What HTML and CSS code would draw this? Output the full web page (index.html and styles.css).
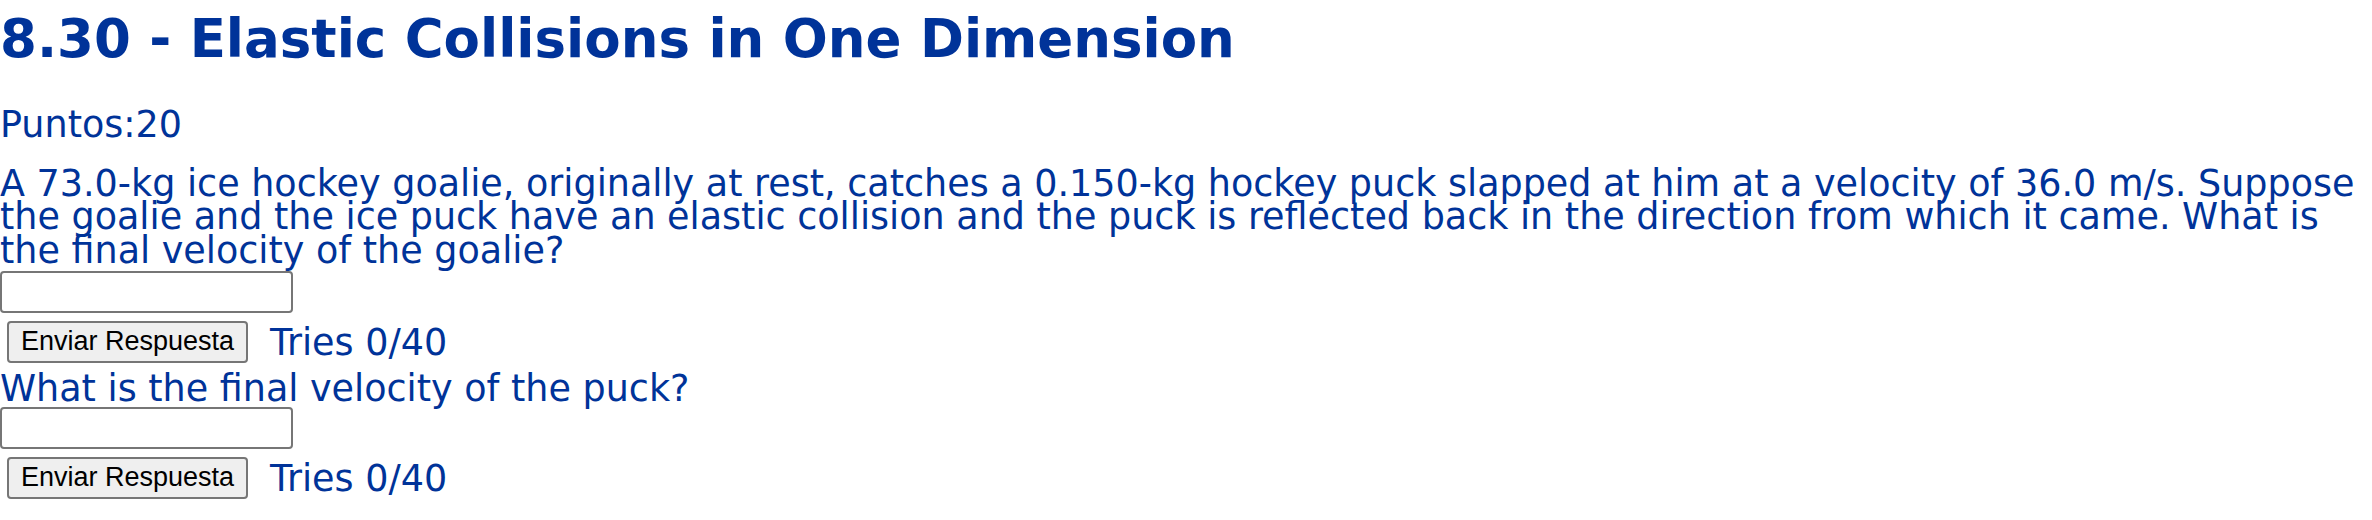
FILE: index.html
```html
<!DOCTYPE html>
<html lang="en">
<head>
<meta charset="utf-8">
<title>8.30 - Elastic Collisions in One Dimension</title>
<link rel="stylesheet" href="styles.css">
</head>
<body>
<h1 class="title">8.30 - Elastic Collisions in One Dimension</h1>
<div class="points">Puntos:20</div>
<p class="question">A 73.0-kg ice hockey goalie, originally at rest, catches a 0.150-kg hockey puck slapped at him at a velocity of 36.0 m/s. Suppose the goalie and the ice puck have an elastic collision and the puck is reflected back in the direction from which it came. What is the final velocity of the goalie?</p>
<input class="answer answer-first" type="text">
<div class="submit-row">
  <button class="submit" type="button">Enviar Respuesta</button>
  <span class="tries">Tries 0/40</span>
</div>
<div class="subquestion">What is the final velocity of the puck?</div>
<input class="answer answer-second" type="text">
<div class="submit-row">
  <button class="submit" type="button">Enviar Respuesta</button>
  <span class="tries">Tries 0/40</span>
</div>
</body>
</html>
```

FILE: styles.css
```css
html, body {
  background: #ffffff;
}
body {
  margin: 0;
  font-family: "DejaVu Sans", Verdana, sans-serif;
  font-size: 36.5px;
  line-height: 33.5px;
  color: #003399;
}
.title {
  margin: 8px 0 0;
  font-size: 53px;
  line-height: 62px;
  font-weight: bold;
}
.points {
  margin-top: 38px;
}
.question {
  margin: 25px 0 0;
  width: 2372px;
}
.answer {
  display: block;
  box-sizing: border-box;
  width: 293px;
  height: 42px;
  margin: 0;
  padding: 0 4px;
  border: 2px solid #767676;
  border-radius: 4px;
  background: #ffffff;
  font-size: 26px;
}
.answer-first {
  margin-top: 4px;
}
.answer-second {
  margin-top: 1px;
}
.submit-row {
  display: flex;
  align-items: flex-start;
  margin-top: 8px;
}
.submit {
  box-sizing: border-box;
  width: 241px;
  height: 42px;
  margin: 0 0 0 7px;
  padding: 3px 0 5px;
  border: 2px solid #767676;
  border-radius: 4px;
  background: #efefef;
  color: #000000;
  font-family: "Liberation Sans", Arial, sans-serif;
  font-size: 27px;
  line-height: 30px;
  text-align: center;
}
.tries {
  margin: 5px 0 0 22px;
}
.subquestion {
  margin-top: 9px;
}
```
